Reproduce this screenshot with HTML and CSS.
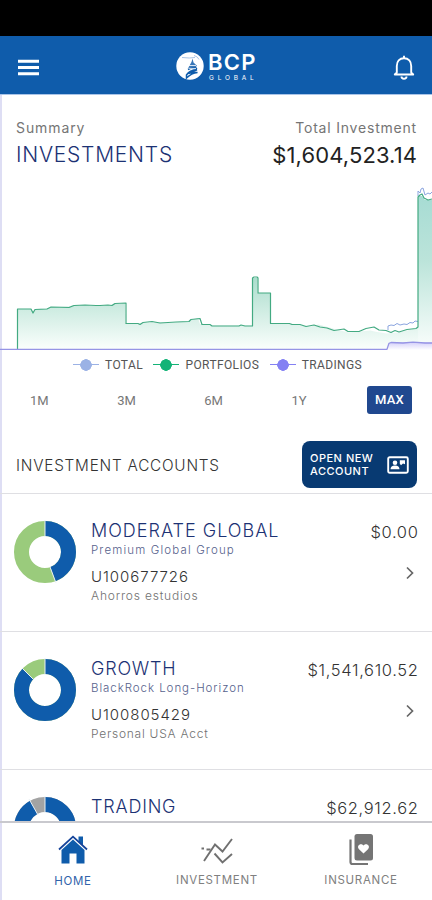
FILE: index.html
```html
<!DOCTYPE html>
<html lang="en">
<head>
<meta charset="utf-8">
<title>BCP Global</title>
<link rel="stylesheet" href="styles.css">
</head>
<body>
<div class="app">
  <div class="status"></div>
  <header class="bar">
    <svg class="menu" viewBox="0 0 20 16"><path d="M0 2h20M0 8h20M0 14h20"/></svg>
    <div class="brand">
      <svg class="mark" viewBox="0 0 28 28">
        <circle cx="14" cy="14" r="13.7" fill="#fff"/>
        <path d="M6 5.500q8 1 13 0M18 3.500q4 1 5 4" fill="none" stroke="#a9c4e5" stroke-width="1"/>
        <path d="M16.500 6.500l1 4 3.700 3.500h-1l.8 4-9-1.500 1.500-3 2-3.500z" fill="#3977b8"/>
        <path d="M12 17.500q5-3 9-.5M10.500 23q3-5 10.500-5.300-5 2-6.500 3.300 4-.8 7-.5-6 .5-11 5.500z" fill="none" stroke="#0f5cab" stroke-width="1.500"/>
        <path d="M13 13.500h7M12.500 16.300l7.500.2" stroke="#fff" stroke-width=".8"/>
      </svg>
      <div class="wordmark"><span class="bcp">BCP</span><span class="global">GLOBAL</span></div>
    </div>
    <svg class="bell" viewBox="0 0 22 26"><path d="M3.800 18.500V12C3.800 7.500 6.500 4.300 11 4.300S18.200 7.500 18.200 12v6.500l2 2H1.800z"/><path d="M11 4.300V1.800" /><path d="M8.500 22.500a2.500 2.200 0 0 0 5 0"/></svg>
  </header>

  <section class="summary">
    <div><div class="label">Summary</div><div class="headline">INVESTMENTS</div></div>
    <div class="right"><div class="label total-label">Total Investment</div><div class="total">$1,604,523.14</div></div>
  </section>

  <svg class="chart" viewBox="0 180 432 172">
    <defs>
      <linearGradient id="low" gradientUnits="userSpaceOnUse" x1="0" y1="275" x2="0" y2="349"><stop offset="0" stop-color="#a8dccb"/><stop offset="1" stop-color="#fafefc"/></linearGradient>
      <linearGradient id="high" gradientUnits="userSpaceOnUse" x1="0" y1="190" x2="0" y2="349"><stop offset="0" stop-color="#a5dbd3"/><stop offset=".45" stop-color="#bce4da"/><stop offset="1" stop-color="#fafefc"/></linearGradient>
      <linearGradient id="trade" x1="0" y1="0" x2="0" y2="1"><stop offset="0" stop-color="#d5d1fa"/><stop offset="1" stop-color="#fff"/></linearGradient>
    </defs>
    <path fill="url(#low)" d="M17.500 349V309H31l2 3 2-3 12-.5 4-1.500 18-.5 5-1.500 22 .5 15-.5 3-1.500h11V323l14 .5 14-1.500 18 .5 17-1.500 10-3 2 6h8l2 1.500H252.500V278h5v15h13v30l20 .5 20 3 8-2 18 5 12 3 22-2 4 1 12 2 12-1L418 328V349z"/>
    <path fill="url(#high)" d="M418 349V196h4l3 4h7v149z"/>
    <path fill="url(#trade)" d="M388 349l2-6.500h42V350h-44z"/>
    <path class="line total-line" d="M388 330v-4l3-1 3 .500 3-2 3 1.500 4-1 3 .500 3-2 3 .500 2-2 3 .500M418 196v-5l2 2 1-4 2-1 2 7 3-2 2 1 2-2"/>
    <path class="line portfolio-line" d="M17.500 349V309H31l2 4 2-3.500 12-.5 4-2 18 .500 5-2 11-.500 11 .500h4l8-.500 4 .500 3-2 11-.500V323.500h12l2 1 3-2 9-1 8 1.500 16-1 13-.500 2-2 9-1 2 6h8l2 1.500h27l2-1 4 1H252.500V278l1.500-1h3l1 1v15h12.500V323.500h19L292 324.500H300L306 326.500 314 325 320 327 327 328 334 330.500 344 329 348 331.500H359L366 328.500 374 327 379 330 386 330.500 391 332.500 395 330.500 399 332 407 329.500 416 328.500 418 327V197L420 195 422 194 424 198 428 200 432 199"/>
    <path class="line trading-line" d="M0 349.300H387l2-6 2-.8 12 .5 10-.8 12 .8h7"/>
  </svg>

  <div class="legend">
    <span class="key sky"><i></i>TOTAL</span>
    <span class="key green"><i></i>PORTFOLIOS</span>
    <span class="key violet"><i></i>TRADINGS</span>
  </div>

  <div class="ranges"><span>1M</span><span>3M</span><span>6M</span><span>1Y</span><span class="active">MAX</span></div>

  <section class="accounts-head">
    <h2>INVESTMENT ACCOUNTS</h2>
    <button class="open">
      <span>OPEN NEW<br>ACCOUNT</span>
      <svg viewBox="0 0 22 18"><rect x="1.200" y="1.200" width="19.600" height="15.600" rx="1.500" fill="none" stroke="#fff" stroke-width="1.900"/><circle cx="8" cy="6.800" r="2.300" fill="#fff"/><path d="M3.500 13.300q0-3.800 4.500-3.800t4.500 3.800zM12.800 4.300h5.200v4l-2-.8-2 1.800-1.200-1.500z" fill="#fff"/></svg>
    </button>
  </section>

  <main class="accounts">
    <article class="account">
      <svg class="donut" viewBox="0 0 64 64"><circle class="ring lime" cx="32" cy="32" r="23.500"/><circle class="ring blue" cx="32" cy="32" r="23.500" pathLength="100" stroke-dasharray="44.500 55.500"/><path class="cut" d="M32 0v17M37 47l6 16"/></svg>
      <div class="details"><h3 class="moderate">MODERATE GLOBAL</h3><p class="plan p1">Premium Global Group</p><p class="number">U100677726</p><p class="note n1">Ahorros estudios</p></div>
      <div class="side"><span class="amount a1">$0.00</span><svg class="chevron" viewBox="0 0 10 14"><path d="M2 1.500L7.500 7 2 12.500"/></svg></div>
    </article>
    <article class="account">
      <svg class="donut" viewBox="0 0 64 64"><circle class="ring lime" cx="32" cy="32" r="23.500"/><circle class="ring blue" cx="32" cy="32" r="23.500" pathLength="100" stroke-dasharray="87 13"/><path class="cut" d="M32 0v17M21 22L9 10"/></svg>
      <div class="details"><h3 class="growth">GROWTH</h3><p class="plan p2">BlackRock Long-Horizon</p><p class="number">U100805429</p><p class="note n2">Personal USA Acct</p></div>
      <div class="side"><span class="amount a2">$1,541,610.52</span><svg class="chevron" viewBox="0 0 10 14"><path d="M2 1.500L7.500 7 2 12.500"/></svg></div>
    </article>
    <article class="account">
      <svg class="donut" viewBox="0 0 64 64"><circle class="ring gray" cx="32" cy="32" r="23.500"/><circle class="ring blue" cx="32" cy="32" r="23.500" pathLength="100" stroke-dasharray="92 8"/><path class="cut" d="M32 0v17M25 19L16 3"/></svg>
      <div class="details"><h3 class="trading">TRADING</h3></div>
      <div class="side"><span class="amount a3">$62,912.62</span></div>
    </article>
  </main>

  <nav class="tabs">
    <a class="tab home"><svg viewBox="0 0 34 34"><path d="M5.500 18L17 7.500 28.500 18v13.500h-8V21.500h-7v10h-8z" fill="#0f5cab"/><path d="M22.500 4.500h4.500v9l-4.500-4z" fill="#0f5cab"/><path d="M3 17.500L17 4.700 31 17.500" fill="none" stroke="#16449a" stroke-width="1.800"/></svg><span>HOME</span></a>
    <a class="tab invest"><svg viewBox="0 0 34 34"><path d="M4 29L15 12.500 22.500 19.500 32 7M14.500 21.500l8 9 9.500-8.500" fill="none" stroke="#707070" stroke-width="1.900"/><path d="M1.500 16.500h2.500M6.500 17.500h4" stroke="#707070" stroke-width="2"/></svg><span>INVESTMENT</span></a>
    <a class="tab insure"><svg viewBox="0 0 34 34"><rect x="10.500" y="2" width="18.500" height="26.500" rx="2.500" fill="#757575"/><path d="M6.500 7.500V30q0 2 2 2H24" fill="none" stroke="#757575" stroke-width="2.200"/><path d="M19.500 21.500l-4.500-4.300c-3-3.500 1.800-7 4.500-3.700 2.700-3.300 7.500.2 4.500 3.700z" fill="#fff"/></svg><span>INSURANCE</span></a>
  </nav>
</div>
</body>
</html>
```
FILE: styles.css
```css
* { box-sizing: border-box; }
body { margin: 0; background: #fff; font-family: Inter, "Liberation Sans", sans-serif; font-weight: 400; }
h2, h3, p { margin: 0; font-weight: 300; }
svg { display: block; flex: none; }
span, div, h2, h3, p { white-space: nowrap; }
.app { width: 432px; height: 900px; display: flex; flex-direction: column; overflow: hidden; background: linear-gradient(90deg, #dedef4 0 2px, #fff 2px); }
.status { height: 36px; background: #000; flex: none; }
.bar { height: 59px; flex: none; background: #0f5cab; border-bottom: 1px solid #a9c4e8; display: flex; align-items: center; justify-content: space-between; padding: 4px 17px 0 18px; }
.menu { width: 21px; height: 17px; fill: none; stroke: #fff; stroke-width: 2.8; margin-top: 1px; }
.brand { display: flex; gap: 4px; margin-left: 1px; }
.mark { width: 28px; height: 28px; }
.wordmark { display: flex; flex-direction: column; color: #fff; width: 49px; }
.bcp { font-size: 22px; line-height: 21px; font-weight: 600; letter-spacing: 1.3px; }
.global { font-size: 6.5px; line-height: 8px; letter-spacing: 3.8px; padding-left: 1px; margin-top: 1px; }
.bell { width: 22px; height: 26px; fill: none; stroke: #fff; stroke-width: 1.9; stroke-linejoin: round; }
.summary { height: 85px; flex: none; display: flex; justify-content: space-between; padding: 23px 15px 0 16px; }
.right { text-align: right; }
.label { font-size: 14px; line-height: 19px; color: #757575; font-weight: 400; letter-spacing: .9px; }
.total-label { letter-spacing: .8px; }
.headline { font-size: 21px; line-height: 26px; margin-top: 5px; font-weight: 300; color: #1c3274; letter-spacing: .75px; }
.total { font-size: 22px; line-height: 26px; margin-top: 5px; color: #222; font-weight: 400; letter-spacing: .1px; }
.chart { width: 432px; height: 172px; flex: none; }
.line { fill: none; stroke-linejoin: round; }
.total-line { stroke: #8ba5df; stroke-width: 1; }
.portfolio-line { stroke: #43aa82; stroke-width: 1.2; }
.trading-line { stroke: #9694e5; stroke-width: 1.3; }
.legend { height: 26px; flex: none; display: flex; padding-left: 73px; gap: 10.5px; font-size: 12px; color: #555; font-family: Roboto, sans-serif; align-items: center; letter-spacing: .38px; }
.key { display: flex; align-items: center; }
.key i { width: 26px; height: 12px; margin-right: 6px; background: radial-gradient(circle, var(--c) 0 5.5px, transparent 6px), linear-gradient(transparent 5px, var(--c) 5px 6.5px, transparent 6.5px); }
.sky { --c: #9bb2e5; }
.green { --c: #13b377; }
.violet { --c: #8481f3; }
.ranges { height: 44px; flex: none; display: flex; align-items: center; justify-content: space-between; padding: 0 20px 0 30px; font: 13px Roboto, sans-serif; color: #777; }
.active { width: 45px; height: 28px; border-radius: 3px; background: #20488f; color: #fff; line-height: 28px; text-align: center; font-weight: 500; margin-left: -8px; letter-spacing: .2px; }
.accounts-head { height: 71px; flex: none; display: flex; justify-content: space-between; align-items: flex-start; padding: 19px 15px 0 16px; }
.accounts-head h2 { font-size: 15.3px; line-height: 49px; color: #333; letter-spacing: .78px; }
.open { width: 115px; height: 47px; border: 0; border-radius: 8px; background: #083a72; color: #fff; display: flex; align-items: center; justify-content: space-between; padding: 0 8px; font: 500 11px/13px Inter, sans-serif; text-align: left; letter-spacing: .5px; }
.open svg { width: 22px; height: 18px; }
.accounts { height: 328px; flex: none; overflow: hidden; }
.account { height: 138px; border-top: 1px solid #dfdfe3; display: flex; padding: 26px 14px 0 13px; }
.donut { width: 64px; height: 64px; }
.ring { fill: none; stroke-width: 15; transform: rotate(-90deg); transform-origin: 32px 32px; }
.lime { stroke: #9acb7c; }
.blue { stroke: #0f5cab; }
.gray { stroke: #a3a3a3; }
.cut { stroke: #e9f0f5; stroke-width: 1; }
.details { margin-left: 14px; flex: 1; }
.details h3 { font-size: 18px; line-height: 22px; color: #1c3274; letter-spacing: 1px; }
.details .growth, .details .trading { letter-spacing: .8px; }
.plan { font-size: 11.5px; line-height: 17px; color: #56618c; }
.p1 { letter-spacing: 1.15px; }
.p2 { letter-spacing: .95px; }
.number { font-size: 15px; line-height: 20px; margin-top: 8px; color: #333; letter-spacing: .95px; }
.note { font-size: 12px; line-height: 18px; color: #717171; }
.n1 { letter-spacing: .8px; }
.n2 { letter-spacing: .75px; }
.side { display: flex; flex-direction: column; align-items: flex-end; }
.amount { font-size: 16.5px; line-height: 24px; color: #333; font-weight: 300; letter-spacing: .65px; margin-right: -.5px; }
.chevron { width: 10px; height: 14px; margin: 22px 3px 0 0; fill: none; stroke: #666; stroke-width: 1.7; }
.tabs { flex: 1; border-top: 2px solid #c9c9ce; display: grid; grid-template-columns: repeat(3, 1fr); padding-top: 9px; }
.tab { display: flex; flex-direction: column; align-items: center; font-size: 11.5px; color: #808080; letter-spacing: .7px; padding-left: 2px; }
.tab svg { width: 34px; height: 34px; }
.tab span { line-height: 16px; margin-top: 6px; }
.home { color: #3163aa; }
.home span { margin-top: 7px; }
```
